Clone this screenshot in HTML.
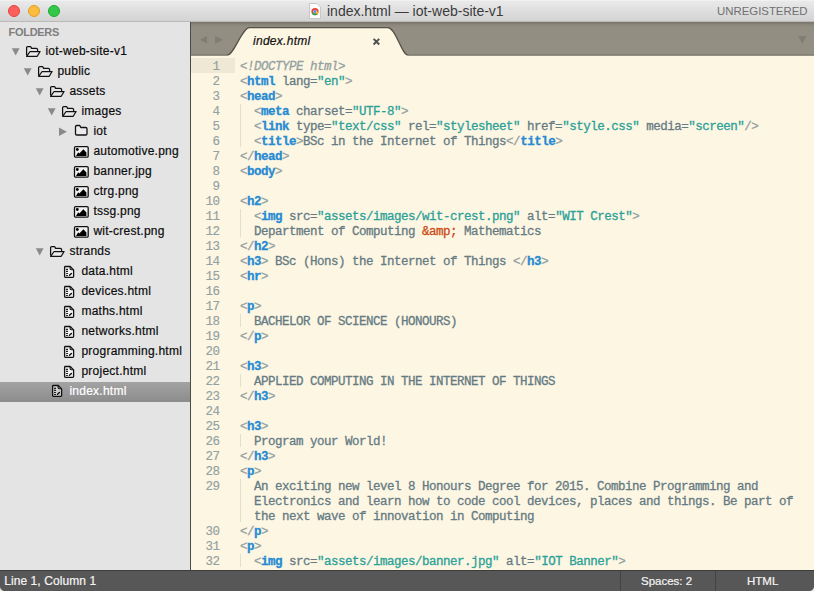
<!DOCTYPE html>
<html><head><meta charset="utf-8">
<style>
*{margin:0;padding:0;box-sizing:border-box}
html,body{width:814px;height:591px;overflow:hidden;background:#e4e4e4}
body{position:relative;font-family:"Liberation Sans",sans-serif}
#title{position:absolute;left:0;top:0;width:814px;height:22px;background:linear-gradient(#f4f4f4 0,#e9e9e9 1.5px,#d3d3d3 21px);border-bottom:1px solid #b9b9b9}
.tl{position:absolute;top:5px;width:12px;height:12px;border-radius:50%}
#ttext{position:absolute;left:327px;top:3.2px;font-size:14px;color:#3b3b3b;white-space:nowrap;line-height:17px}
#unreg{position:absolute;left:717px;top:3.8px;font-size:11.4px;color:#707070;line-height:14px}
#side{position:absolute;left:0;top:22px;width:190px;height:548px;background:#e4e4e4}
#folders{position:absolute;left:8.6px;top:4px;font-weight:bold;font-size:11px;letter-spacing:-0.3px;color:#7f7f7f;line-height:12px}
.row{position:absolute;left:0;width:190px;height:20px}
.row .t{position:absolute;top:2.2px;font-size:12px;letter-spacing:0.25px;line-height:14px;color:#0c0c0c;white-space:nowrap;-webkit-text-stroke:0.2px #0c0c0c}
.row svg{position:absolute}
.sel{background:linear-gradient(#a3a3a3,#8c8c8c)}
.sel svg{top:-0.6px}
.sel .t{top:1.5px;color:#fff;-webkit-text-stroke:0.2px #fff}
#vline{position:absolute;left:190px;top:22px;width:1px;height:548px;background:#4b4b4b}
#tabbar{position:absolute;left:191px;top:22px;width:623px;height:34px;background:#928e82}
#tabtext{position:absolute;left:62px;top:12.3px;font-style:italic;font-size:12px;letter-spacing:0.28px;line-height:14px;color:#111;-webkit-text-stroke:0.2px #111}
#editor{position:absolute;left:191px;top:56px;width:623px;height:514px;background:#fdf6e3;overflow:hidden}
#status{position:absolute;left:0;top:570px;width:814px;height:21px;background:#575757;border-top:1px solid #3c3c3c}
.st{position:absolute;top:2.6px;font-size:11.5px;color:#f4f4f4;-webkit-text-stroke:0.2px #f4f4f4;line-height:14px;white-space:nowrap}
.sep{position:absolute;top:0;width:1px;height:21px;background:#424242}
#code{position:absolute;left:49px;top:4px;font-family:"Liberation Mono",monospace;font-size:12.5px;letter-spacing:-0.5px;line-height:15px;color:#657b83;white-space:pre;-webkit-text-stroke:0.3px currentColor}
#gut{position:absolute;left:0;top:4px;width:28.5px;text-align:right;font-family:"Liberation Mono",monospace;font-size:12.5px;letter-spacing:-0.5px;line-height:15px;color:#93a1a1;white-space:pre;-webkit-text-stroke:0.15px currentColor}
#hl{position:absolute;left:0;top:2px;width:44px;height:15px;background:#eee8d5}
.g{position:absolute;left:49px;width:1px;background:#e4decc}
.k{color:#268bd2;font-weight:bold}
.p{color:#93a1a1}
.s{color:#2aa198}
.d{color:#93a1a1;font-style:italic}
.e{color:#cb4b16}
</style></head><body>
<div id="title">
  <div class="tl" style="left:8px;background:#fc605c;border:0.5px solid #e0443e"></div>
  <div class="tl" style="left:28px;background:#fdbc40;border:0.5px solid #dea123"></div>
  <div class="tl" style="left:48px;background:#34c84a;border:0.5px solid #1aab29"></div>
  <svg style="position:absolute;left:309px;top:3px" width="12" height="16" viewBox="0 0 12 16">
    <path d="M0.5 0.5 H8 L11.5 4 V15.5 H0.5 Z" fill="#fbfbfb" stroke="#c8c8c8" stroke-width="1"/>
    <circle cx="6" cy="8.6" r="3.6" fill="#e94235"/>
    <path d="M6 8.6 L2.9 10.4 A3.6 3.6 0 0 0 8.3 11.4 Z" fill="#34a853"/>
    <path d="M6 8.6 L8.3 11.4 A3.6 3.6 0 0 0 9.6 8.6 Z" fill="#fbbc05"/>
    <circle cx="6" cy="8.6" r="1.7" fill="#fff"/><circle cx="6" cy="8.6" r="1.3" fill="#4285f4"/>
  </svg>
  <div id="ttext">index.html — iot-web-site-v1</div>
  <div id="unreg">UNREGISTERED</div>
</div>
<div id="side">
  <div id="folders">FOLDERS</div>
<div class="row" style="top:20px"><svg style="left:10px" width="36" height="20"><g transform="translate(14,0)"><path d="M-12.2 6.3 H-4.4 L-8.3 13.6 Z" fill="#8a8a8a"/><path d="M2.6 13.6 V5.6 Q2.6 4.5 3.7 4.5 H6.6 L7.6 6.4 H12.3 Q13.6 6.4 13.6 7.7 V9.3" fill="none" stroke="#111" stroke-width="1.25"/><path d="M2.6 14.3 L6.1 9.5 H16.1 L13.2 14.3 Z" fill="#fff" fill-opacity="0.25" stroke="#111" stroke-width="1.25" stroke-linejoin="round"/></g></svg><span class="t" style="left:45.4px">iot-web-site-v1</span></div>
<div class="row" style="top:40px"><svg style="left:22px" width="36" height="20"><g transform="translate(14,0)"><path d="M-12.2 6.3 H-4.4 L-8.3 13.6 Z" fill="#8a8a8a"/><path d="M2.6 13.6 V5.6 Q2.6 4.5 3.7 4.5 H6.6 L7.6 6.4 H12.3 Q13.6 6.4 13.6 7.7 V9.3" fill="none" stroke="#111" stroke-width="1.25"/><path d="M2.6 14.3 L6.1 9.5 H16.1 L13.2 14.3 Z" fill="#fff" fill-opacity="0.25" stroke="#111" stroke-width="1.25" stroke-linejoin="round"/></g></svg><span class="t" style="left:57.4px">public</span></div>
<div class="row" style="top:60px"><svg style="left:34px" width="36" height="20"><g transform="translate(14,0)"><path d="M-12.2 6.3 H-4.4 L-8.3 13.6 Z" fill="#8a8a8a"/><path d="M2.6 13.6 V5.6 Q2.6 4.5 3.7 4.5 H6.6 L7.6 6.4 H12.3 Q13.6 6.4 13.6 7.7 V9.3" fill="none" stroke="#111" stroke-width="1.25"/><path d="M2.6 14.3 L6.1 9.5 H16.1 L13.2 14.3 Z" fill="#fff" fill-opacity="0.25" stroke="#111" stroke-width="1.25" stroke-linejoin="round"/></g></svg><span class="t" style="left:69.4px">assets</span></div>
<div class="row" style="top:80px"><svg style="left:46px" width="36" height="20"><g transform="translate(14,0)"><path d="M-12.2 6.3 H-4.4 L-8.3 13.6 Z" fill="#8a8a8a"/><path d="M2.6 13.6 V5.6 Q2.6 4.5 3.7 4.5 H6.6 L7.6 6.4 H12.3 Q13.6 6.4 13.6 7.7 V9.3" fill="none" stroke="#111" stroke-width="1.25"/><path d="M2.6 14.3 L6.1 9.5 H16.1 L13.2 14.3 Z" fill="#fff" fill-opacity="0.25" stroke="#111" stroke-width="1.25" stroke-linejoin="round"/></g></svg><span class="t" style="left:81.4px">images</span></div>
<div class="row" style="top:100px"><svg style="left:58px" width="36" height="20"><g transform="translate(14,0)"><path d="M-13 5.4 L-5.2 9.65 L-13 13.9 Z" fill="#8a8a8a"/><path d="M3.5 12 V4.8 Q3.5 3.5 4.8 3.5 H7.8 L8.8 5.5 H13.6 Q15 5.5 15 6.9 V11.7 Q15 13 13.7 13 H4.8 Q3.5 13 3.5 11.7 Z" fill="#fff" fill-opacity="0.25" stroke="#111" stroke-width="1.3" stroke-linejoin="round"/></g></svg><span class="t" style="left:93.4px">iot</span></div>
<div class="row" style="top:120px"><svg style="left:72px" width="20" height="20"><rect x="2.5" y="4.55" width="13.7" height="10.55" rx="1.2" fill="#fff" fill-opacity="0.5" stroke="#111" stroke-width="1.3"/><circle cx="5.3" cy="7.5" r="1.4" fill="#000"/><path d="M4 14 L6.2 10.2 L7.3 11.5 L11.4 7.2 L14.4 10.5 V14 Z" fill="#000"/></svg><span class="t" style="left:93.4px">automotive.png</span></div>
<div class="row" style="top:140px"><svg style="left:72px" width="20" height="20"><rect x="2.5" y="4.55" width="13.7" height="10.55" rx="1.2" fill="#fff" fill-opacity="0.5" stroke="#111" stroke-width="1.3"/><circle cx="5.3" cy="7.5" r="1.4" fill="#000"/><path d="M4 14 L6.2 10.2 L7.3 11.5 L11.4 7.2 L14.4 10.5 V14 Z" fill="#000"/></svg><span class="t" style="left:93.4px">banner.jpg</span></div>
<div class="row" style="top:160px"><svg style="left:72px" width="20" height="20"><rect x="2.5" y="4.55" width="13.7" height="10.55" rx="1.2" fill="#fff" fill-opacity="0.5" stroke="#111" stroke-width="1.3"/><circle cx="5.3" cy="7.5" r="1.4" fill="#000"/><path d="M4 14 L6.2 10.2 L7.3 11.5 L11.4 7.2 L14.4 10.5 V14 Z" fill="#000"/></svg><span class="t" style="left:93.4px">ctrg.png</span></div>
<div class="row" style="top:180px"><svg style="left:72px" width="20" height="20"><rect x="2.5" y="4.55" width="13.7" height="10.55" rx="1.2" fill="#fff" fill-opacity="0.5" stroke="#111" stroke-width="1.3"/><circle cx="5.3" cy="7.5" r="1.4" fill="#000"/><path d="M4 14 L6.2 10.2 L7.3 11.5 L11.4 7.2 L14.4 10.5 V14 Z" fill="#000"/></svg><span class="t" style="left:93.4px">tssg.png</span></div>
<div class="row" style="top:200px"><svg style="left:72px" width="20" height="20"><rect x="2.5" y="4.55" width="13.7" height="10.55" rx="1.2" fill="#fff" fill-opacity="0.5" stroke="#111" stroke-width="1.3"/><circle cx="5.3" cy="7.5" r="1.4" fill="#000"/><path d="M4 14 L6.2 10.2 L7.3 11.5 L11.4 7.2 L14.4 10.5 V14 Z" fill="#000"/></svg><span class="t" style="left:93.4px">wit-crest.png</span></div>
<div class="row" style="top:220px"><svg style="left:34px" width="36" height="20"><g transform="translate(14,0)"><path d="M-12.2 6.3 H-4.4 L-8.3 13.6 Z" fill="#8a8a8a"/><path d="M2.6 13.6 V5.6 Q2.6 4.5 3.7 4.5 H6.6 L7.6 6.4 H12.3 Q13.6 6.4 13.6 7.7 V9.3" fill="none" stroke="#111" stroke-width="1.25"/><path d="M2.6 14.3 L6.1 9.5 H16.1 L13.2 14.3 Z" fill="#fff" fill-opacity="0.25" stroke="#111" stroke-width="1.25" stroke-linejoin="round"/></g></svg><span class="t" style="left:69.4px">strands</span></div>
<div class="row" style="top:240px"><svg style="left:60px" width="20" height="20"><path d="M4.6 5.3 Q4.6 4.5 5.4 4.5 H10.2 L13.6 7.9 V14.5 Q13.6 15.3 12.8 15.3 H5.4 Q4.6 15.3 4.6 14.5 Z" fill="#fff" fill-opacity="0.5" stroke="#111" stroke-width="1.3" stroke-linejoin="round"/><path d="M10.1 4.6 V6.6 Q10.1 7.8 11.3 7.8 H13.5" fill="none" stroke="#111" stroke-width="1.1"/><path d="M6.1 7.4 H7.9 M6.1 9.4 H7.9 M6.1 11.5 H7.9 M6.1 13.5 H7.9" stroke="#111" stroke-width="1.2"/><path d="M9.5 13.3 L11.4 11.4" stroke="#111" stroke-width="1.4" stroke-linecap="round"/></svg><span class="t" style="left:81.4px">data.html</span></div>
<div class="row" style="top:260px"><svg style="left:60px" width="20" height="20"><path d="M4.6 5.3 Q4.6 4.5 5.4 4.5 H10.2 L13.6 7.9 V14.5 Q13.6 15.3 12.8 15.3 H5.4 Q4.6 15.3 4.6 14.5 Z" fill="#fff" fill-opacity="0.5" stroke="#111" stroke-width="1.3" stroke-linejoin="round"/><path d="M10.1 4.6 V6.6 Q10.1 7.8 11.3 7.8 H13.5" fill="none" stroke="#111" stroke-width="1.1"/><path d="M6.1 7.4 H7.9 M6.1 9.4 H7.9 M6.1 11.5 H7.9 M6.1 13.5 H7.9" stroke="#111" stroke-width="1.2"/><path d="M9.5 13.3 L11.4 11.4" stroke="#111" stroke-width="1.4" stroke-linecap="round"/></svg><span class="t" style="left:81.4px">devices.html</span></div>
<div class="row" style="top:280px"><svg style="left:60px" width="20" height="20"><path d="M4.6 5.3 Q4.6 4.5 5.4 4.5 H10.2 L13.6 7.9 V14.5 Q13.6 15.3 12.8 15.3 H5.4 Q4.6 15.3 4.6 14.5 Z" fill="#fff" fill-opacity="0.5" stroke="#111" stroke-width="1.3" stroke-linejoin="round"/><path d="M10.1 4.6 V6.6 Q10.1 7.8 11.3 7.8 H13.5" fill="none" stroke="#111" stroke-width="1.1"/><path d="M6.1 7.4 H7.9 M6.1 9.4 H7.9 M6.1 11.5 H7.9 M6.1 13.5 H7.9" stroke="#111" stroke-width="1.2"/><path d="M9.5 13.3 L11.4 11.4" stroke="#111" stroke-width="1.4" stroke-linecap="round"/></svg><span class="t" style="left:81.4px">maths.html</span></div>
<div class="row" style="top:300px"><svg style="left:60px" width="20" height="20"><path d="M4.6 5.3 Q4.6 4.5 5.4 4.5 H10.2 L13.6 7.9 V14.5 Q13.6 15.3 12.8 15.3 H5.4 Q4.6 15.3 4.6 14.5 Z" fill="#fff" fill-opacity="0.5" stroke="#111" stroke-width="1.3" stroke-linejoin="round"/><path d="M10.1 4.6 V6.6 Q10.1 7.8 11.3 7.8 H13.5" fill="none" stroke="#111" stroke-width="1.1"/><path d="M6.1 7.4 H7.9 M6.1 9.4 H7.9 M6.1 11.5 H7.9 M6.1 13.5 H7.9" stroke="#111" stroke-width="1.2"/><path d="M9.5 13.3 L11.4 11.4" stroke="#111" stroke-width="1.4" stroke-linecap="round"/></svg><span class="t" style="left:81.4px">networks.html</span></div>
<div class="row" style="top:320px"><svg style="left:60px" width="20" height="20"><path d="M4.6 5.3 Q4.6 4.5 5.4 4.5 H10.2 L13.6 7.9 V14.5 Q13.6 15.3 12.8 15.3 H5.4 Q4.6 15.3 4.6 14.5 Z" fill="#fff" fill-opacity="0.5" stroke="#111" stroke-width="1.3" stroke-linejoin="round"/><path d="M10.1 4.6 V6.6 Q10.1 7.8 11.3 7.8 H13.5" fill="none" stroke="#111" stroke-width="1.1"/><path d="M6.1 7.4 H7.9 M6.1 9.4 H7.9 M6.1 11.5 H7.9 M6.1 13.5 H7.9" stroke="#111" stroke-width="1.2"/><path d="M9.5 13.3 L11.4 11.4" stroke="#111" stroke-width="1.4" stroke-linecap="round"/></svg><span class="t" style="left:81.4px">programming.html</span></div>
<div class="row" style="top:340px"><svg style="left:60px" width="20" height="20"><path d="M4.6 5.3 Q4.6 4.5 5.4 4.5 H10.2 L13.6 7.9 V14.5 Q13.6 15.3 12.8 15.3 H5.4 Q4.6 15.3 4.6 14.5 Z" fill="#fff" fill-opacity="0.5" stroke="#111" stroke-width="1.3" stroke-linejoin="round"/><path d="M10.1 4.6 V6.6 Q10.1 7.8 11.3 7.8 H13.5" fill="none" stroke="#111" stroke-width="1.1"/><path d="M6.1 7.4 H7.9 M6.1 9.4 H7.9 M6.1 11.5 H7.9 M6.1 13.5 H7.9" stroke="#111" stroke-width="1.2"/><path d="M9.5 13.3 L11.4 11.4" stroke="#111" stroke-width="1.4" stroke-linecap="round"/></svg><span class="t" style="left:81.4px">project.html</span></div>
<div class="row sel" style="top:360px"><svg style="left:48px" width="20" height="20"><path d="M4.6 5.3 Q4.6 4.5 5.4 4.5 H10.2 L13.6 7.9 V14.5 Q13.6 15.3 12.8 15.3 H5.4 Q4.6 15.3 4.6 14.5 Z" fill="#fff" fill-opacity="0.5" stroke="#111" stroke-width="1.3" stroke-linejoin="round"/><path d="M10.1 4.6 V6.6 Q10.1 7.8 11.3 7.8 H13.5" fill="none" stroke="#111" stroke-width="1.1"/><path d="M6.1 7.4 H7.9 M6.1 9.4 H7.9 M6.1 11.5 H7.9 M6.1 13.5 H7.9" stroke="#111" stroke-width="1.2"/><path d="M9.5 13.3 L11.4 11.4" stroke="#111" stroke-width="1.4" stroke-linecap="round"/></svg><span class="t" style="left:69.4px">index.html</span></div>

</div>
<div id="vline"></div>
<div id="tabbar"><svg width="623" height="34" viewBox="191 22 623 34" style="position:absolute;left:0;top:0">
<defs><linearGradient id="tbg" x1="0" y1="0" x2="0" y2="1"><stop offset="0" stop-color="#77736a"/><stop offset="0.09" stop-color="#8c887c"/><stop offset="0.16" stop-color="#928e82"/><stop offset="1" stop-color="#938f83"/></linearGradient></defs>
<rect x="191" y="22" width="623" height="34" fill="url(#tbg)"/>
<rect x="191" y="54.8" width="623" height="1.2" fill="#524e46"/>
<path d="M227 55.4 C234 55.4 242 27.7 249.5 27.7 H388 C396 27.7 401.5 55.4 408.5 55.4 L409 57 L227 57 Z" fill="#fdf6e3" stroke="#55514a" stroke-width="1.25"/>
<rect x="191" y="55.6" width="623" height="1" fill="#fdf6e3"/>
<path d="M200 39.7 L207 35.7 V43.7 Z M215 35.7 L222.7 39.7 L215 43.7 Z" fill="#807d77"/>
<path d="M798 36 H806.4 L802.2 43.7 Z" fill="#807d77"/>
<path d="M373.6 38.9 L379.2 44.5 M379.2 38.9 L373.6 44.5" stroke="#505050" stroke-width="2"/>
</svg><div id="tabtext">index.html</div></div>
<div id="editor">
  <div id="hl"></div>
<div class="g" style="top:48px;height:43px"></div><div class="g" style="top:153px;height:28px"></div><div class="g" style="top:258px;height:13px"></div><div class="g" style="top:318px;height:13px"></div><div class="g" style="top:378px;height:13px"></div><div class="g" style="top:423px;height:43px"></div><div class="g" style="top:498px;height:13px"></div>
  <div id="gut">1
2
3
4
5
6
7
8
9
10
11
12
13
14
15
16
17
18
19
20
21
22
23
24
25
26
27
28
29


30
31
32</div>
<div id="code"><span class="d">&lt;!DOCTYPE html&gt;</span>
<span class="p">&lt;</span><span class="k">html</span> lang=<span class="s">"en"</span><span class="p">&gt;</span>
<span class="p">&lt;</span><span class="k">head</span><span class="p">&gt;</span>
  <span class="p">&lt;</span><span class="k">meta</span> charset=<span class="s">"UTF-8"</span><span class="p">&gt;</span>
  <span class="p">&lt;</span><span class="k">link</span> type=<span class="s">"text/css"</span> rel=<span class="s">"stylesheet"</span> href=<span class="s">"style.css"</span> media=<span class="s">"screen"</span><span class="p">/&gt;</span>
  <span class="p">&lt;</span><span class="k">title</span><span class="p">&gt;</span>BSc in the Internet of Things<span class="p">&lt;/</span><span class="k">title</span><span class="p">&gt;</span>
<span class="p">&lt;/</span><span class="k">head</span><span class="p">&gt;</span>
<span class="p">&lt;</span><span class="k">body</span><span class="p">&gt;</span>

<span class="p">&lt;</span><span class="k">h2</span><span class="p">&gt;</span>
  <span class="p">&lt;</span><span class="k">img</span> src=<span class="s">"assets/images/wit-crest.png"</span> alt=<span class="s">"WIT Crest"</span><span class="p">&gt;</span>
  Department of Computing <span class="e">&amp;amp;</span> Mathematics
<span class="p">&lt;/</span><span class="k">h2</span><span class="p">&gt;</span>
<span class="p">&lt;</span><span class="k">h3</span><span class="p">&gt;</span> BSc (Hons) the Internet of Things <span class="p">&lt;/</span><span class="k">h3</span><span class="p">&gt;</span>
<span class="p">&lt;</span><span class="k">hr</span><span class="p">&gt;</span>

<span class="p">&lt;</span><span class="k">p</span><span class="p">&gt;</span>
  BACHELOR OF SCIENCE (HONOURS)
<span class="p">&lt;/</span><span class="k">p</span><span class="p">&gt;</span>

<span class="p">&lt;</span><span class="k">h3</span><span class="p">&gt;</span>
  APPLIED COMPUTING IN THE INTERNET OF THINGS
<span class="p">&lt;/</span><span class="k">h3</span><span class="p">&gt;</span>

<span class="p">&lt;</span><span class="k">h3</span><span class="p">&gt;</span>
  Program your World!
<span class="p">&lt;/</span><span class="k">h3</span><span class="p">&gt;</span>
<span class="p">&lt;</span><span class="k">p</span><span class="p">&gt;</span>
  An exciting new level 8 Honours Degree for 2015. Combine Programming and
  Electronics and learn how to code cool devices, places and things. Be part of
  the next wave of innovation in Computing
<span class="p">&lt;/</span><span class="k">p</span><span class="p">&gt;</span>
<span class="p">&lt;</span><span class="k">p</span><span class="p">&gt;</span>
  <span class="p">&lt;</span><span class="k">img</span> src=<span class="s">"assets/images/banner.jpg"</span> alt=<span class="s">"IOT Banner"</span><span class="p">&gt;</span></div>
</div>
<div id="status">
  <div class="st" style="left:4.2px;font-size:12px;letter-spacing:0.08px">Line 1, Column 1</div>
  <div class="sep" style="left:620px"></div>
  <div class="st" style="left:641px">Spaces: 2</div>
  <div class="sep" style="left:715px"></div>
  <div class="st" style="left:747px">HTML</div>
</div>
<div style="position:absolute;left:0;top:586px;width:5px;height:5px;background:radial-gradient(circle at 5px 0,rgba(0,0,0,0) 4.6px,#e6e6e6 5.6px)"></div>
<div style="position:absolute;left:809px;top:586px;width:5px;height:5px;background:radial-gradient(circle at 0 0,rgba(0,0,0,0) 4.6px,#e6e6e6 5.6px)"></div>
</body></html>
